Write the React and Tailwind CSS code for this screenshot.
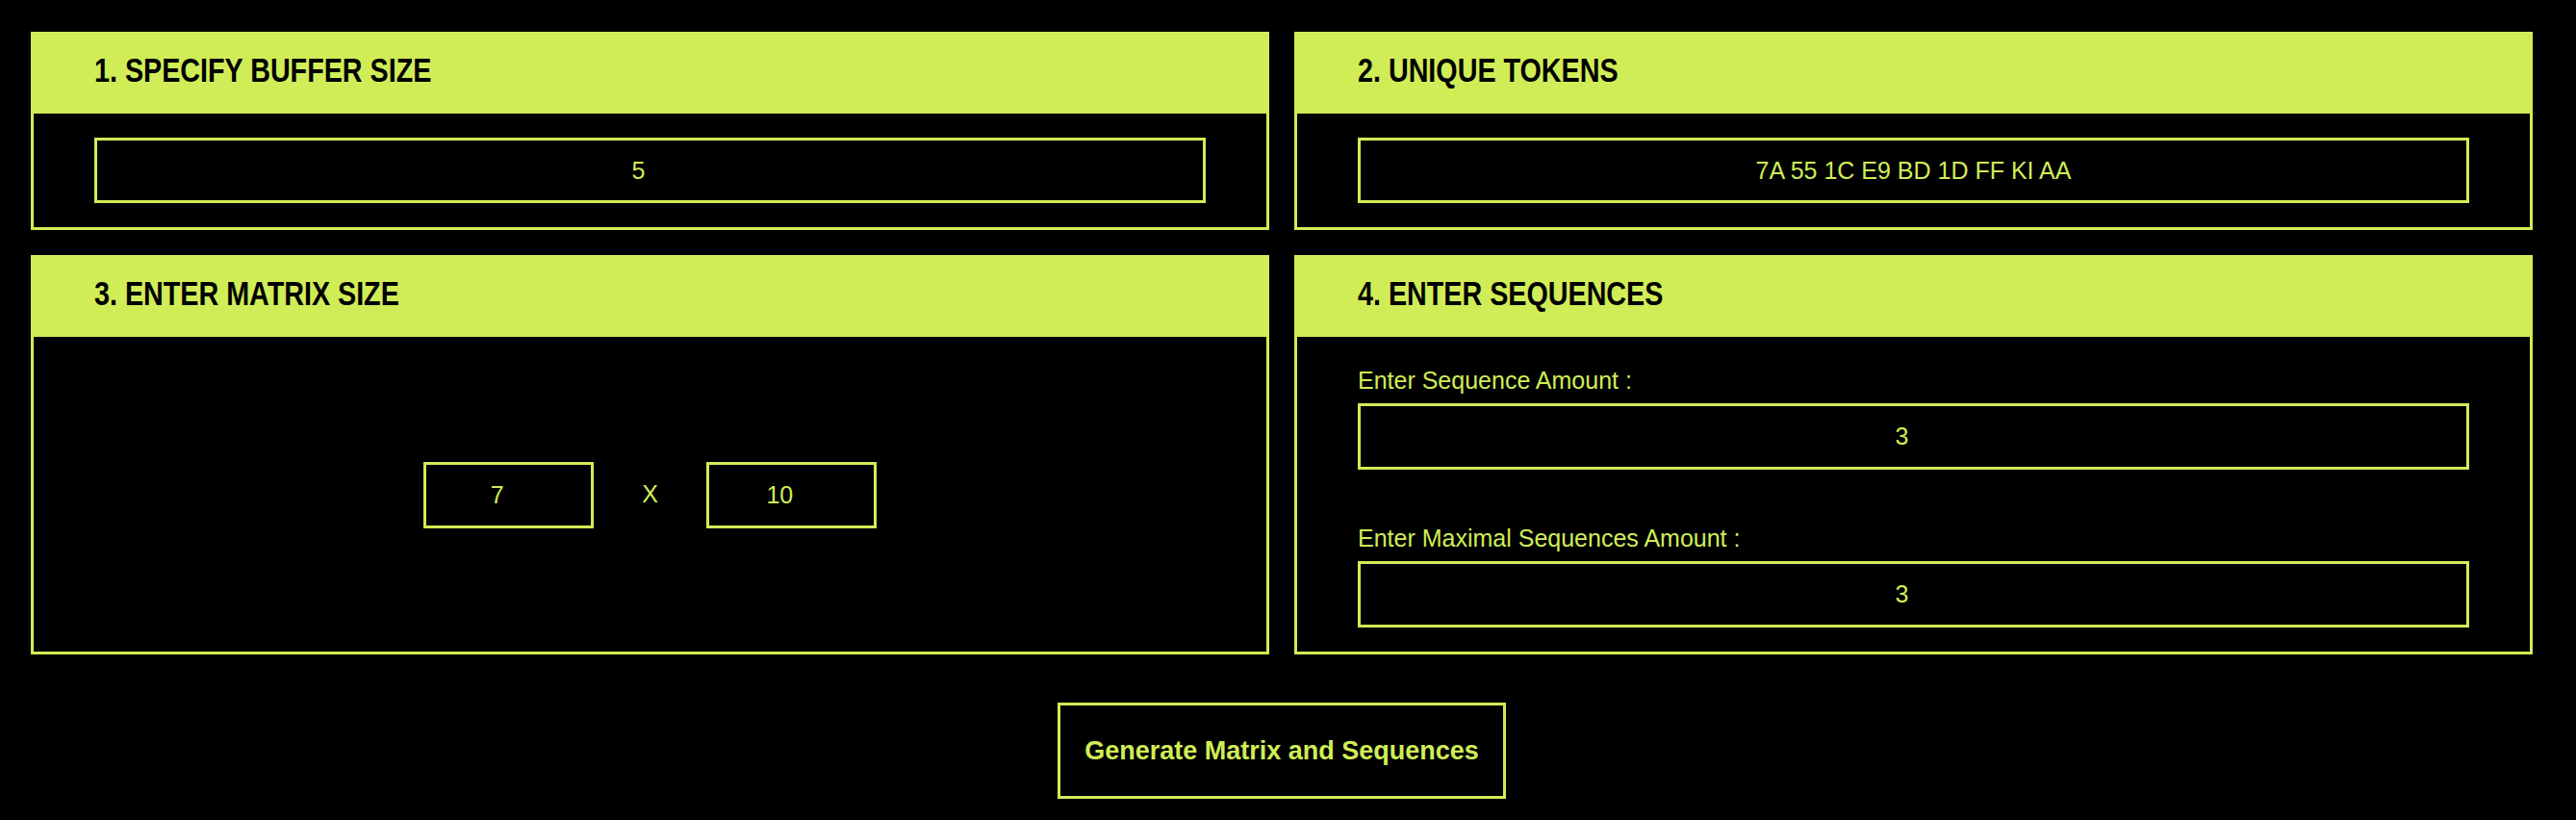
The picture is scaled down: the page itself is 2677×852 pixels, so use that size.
import React, { useState } from 'react';

const sans = { fontFamily: '"Liberation Sans", Arial, sans-serif' };

function Panel({ title, children, bodyClass = '' }) {
  return (
    <section className="flex flex-col border-[3px] border-[#d0ed57] bg-black">
      <div className="h-[82px] bg-[#d0ed57] flex items-center pl-[63px] pb-[9px]">
        {/* condensed heading: no narrow face installed, so squeeze the regular one */}
        <h2 className="text-[35px] font-bold leading-none text-black whitespace-nowrap origin-left scale-x-[0.82]">
          {title}
        </h2>
      </div>
      <div className={`flex-1 ${bodyClass}`}>{children}</div>
    </section>
  );
}

function Field({ value, onChange, numeric = true, className = '' }) {
  return (
    <input
      type="text"
      value={value}
      onChange={e => onChange(e.target.value)}
      className={`h-[68px] border-[3px] border-[#d0ed57] bg-black text-[#d0ed57] text-[25px] text-center outline-none ${numeric ? 'pr-[24px]' : ''} ${className}`}
      style={sans}
    />
  );
}

export default function App() {
  const [buffer, setBuffer] = useState('5');
  const [tokens, setTokens] = useState('7A 55 1C E9 BD 1D FF KI AA');
  const [rows, setRows] = useState('7');
  const [cols, setCols] = useState('10');
  const [seqAmount, setSeqAmount] = useState('3');
  const [maxSeq, setMaxSeq] = useState('3');

  return (
    <div className="min-h-[852px] bg-black pt-[33px] pl-[32px] pr-[45px]" style={sans}>
      <div className="grid grid-cols-2 gap-[26px]">
        <Panel title="1. SPECIFY BUFFER SIZE" bodyClass="px-[63px] py-[25px]">
          <Field value={buffer} onChange={setBuffer} className="w-full block" />
        </Panel>
        <Panel title="2. UNIQUE TOKENS" bodyClass="px-[63px] py-[25px]">
          <Field value={tokens} onChange={setTokens} numeric={false} className="w-full block" />
        </Panel>

        <Panel title="3. ENTER MATRIX SIZE" bodyClass="flex items-center justify-center">
          <div className="flex items-center gap-[50px] pt-[1px]">
            <Field value={rows} onChange={setRows} className="w-[177px] h-[69px]" />
            <span className="text-[25px] text-[#d0ed57]">X</span>
            <Field value={cols} onChange={setCols} className="w-[177px] h-[69px]" />
          </div>
        </Panel>
        <Panel title="4. ENTER SEQUENCES" bodyClass="px-[63px] pt-[31px] pb-[25px]">
          <label className="block text-[25px] leading-[29px] text-[#d0ed57] mb-[9px]">Enter Sequence Amount :</label>
          <Field value={seqAmount} onChange={setSeqAmount} className="w-full block h-[69px]" />
          <label className="block text-[25px] leading-[29px] text-[#d0ed57] mt-[57px] mb-[9px]">Enter Maximal Sequences Amount :</label>
          <Field value={maxSeq} onChange={setMaxSeq} className="w-full block h-[69px]" />
        </Panel>
      </div>

      <div className="flex justify-center mt-[50px]">
        <button className="w-[466px] h-[100px] border-[3px] border-[#d0ed57] bg-black text-[#d0ed57] text-[27px] font-bold">
          Generate Matrix and Sequences
        </button>
      </div>
    </div>
  );
}
